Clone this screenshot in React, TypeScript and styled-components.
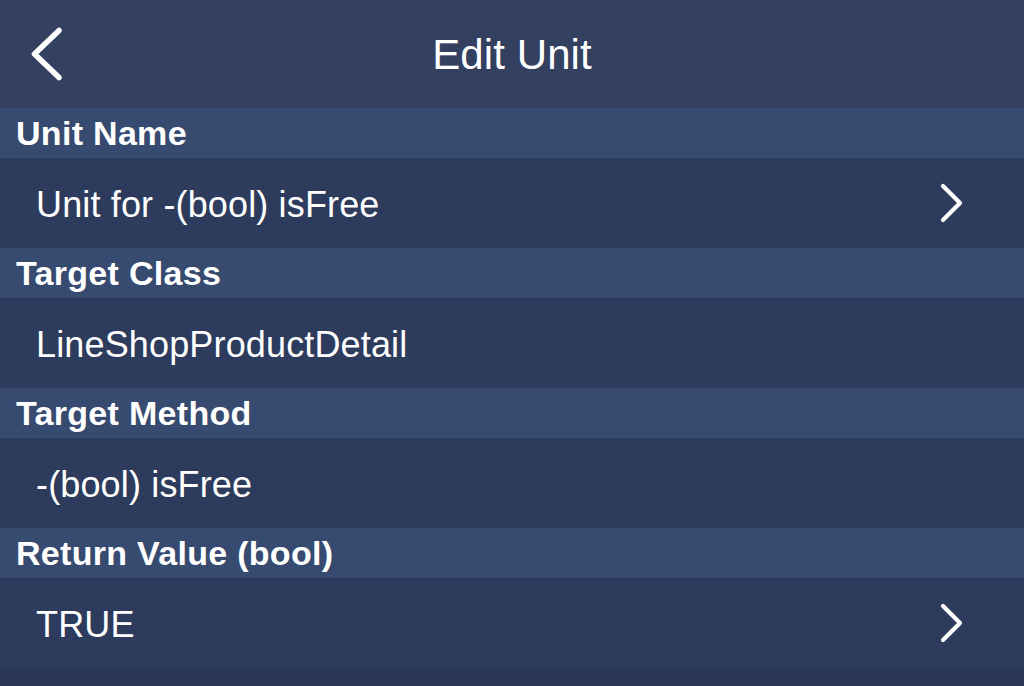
import React from 'react';
import styled, { createGlobalStyle } from 'styled-components';

const GlobalStyle = createGlobalStyle`
  html, body {
    margin: 0;
    padding: 0;
    background: #2b3757;
  }
  body {
    font-family: 'Liberation Sans', Arial, sans-serif;
    -webkit-font-smoothing: antialiased;
  }
`;

const Screen = styled.div`
  width: 1024px;
  height: 686px;
  overflow: hidden;
  background: #2b3757;
  color: #ffffff;
  display: flex;
  flex-direction: column;
`;

const NavBar = styled.div`
  height: 108px;
  flex-shrink: 0;
  background: #33405f;
  display: grid;
  grid-template-columns: 1fr auto 1fr;
  align-items: center;
`;

const BackButton = styled.button`
  justify-self: start;
  background: none;
  border: none;
  padding: 0;
  margin: 0 0 0 29px;
  width: 36px;
  height: 56px;
  display: flex;
  align-items: center;
  cursor: pointer;
`;

const Title = styled.h1`
  margin: 0;
  padding-top: 2px;
  font-size: 42px;
  font-weight: 400;
  color: #ffffff;
  letter-spacing: 0.1px;
`;

const SectionHeader = styled.div`
  height: 50px;
  flex-shrink: 0;
  background: #374a6f;
  display: flex;
  align-items: center;
  padding-left: 16px;
  font-size: 34px;
  font-weight: 700;
  letter-spacing: 0.3px;
`;

const Row = styled.div`
  height: 90px;
  flex-shrink: 0;
  background: #2d3b5c;
  display: flex;
  align-items: center;
  justify-content: space-between;
  padding: 0 59px 0 36px;
  font-size: 36px;
  font-weight: 400;
`;

const RowText = styled.span`
  padding-top: 4px;
  letter-spacing: 0.15px;
`;

const BackChevron = () => (
  <svg width="36" height="56" viewBox="0 0 36 56" fill="none">
    <path
      d="M30 4.5 L5.5 28 L30 51.5"
      stroke="#ffffff"
      strokeWidth="5.5"
      strokeLinecap="round"
      strokeLinejoin="round"
    />
  </svg>
);

const Disclosure = () => (
  <svg width="26" height="40" viewBox="0 0 26 40" fill="none">
    <path
      d="M4 3 L21 20 L4 37"
      stroke="#ffffff"
      strokeWidth="4.2"
      strokeLinecap="round"
      strokeLinejoin="round"
    />
  </svg>
);

const sections = [
  { label: 'Unit Name', value: 'Unit for -(bool) isFree', link: true },
  { label: 'Target Class', value: 'LineShopProductDetail', link: false },
  { label: 'Target Method', value: '-(bool) isFree', link: false },
  { label: 'Return Value (bool)', value: 'TRUE', link: true },
];

const App: React.FC = () => {
  return (
    <>
      <GlobalStyle />
      <Screen>
        <NavBar>
          <BackButton aria-label="Back">
            <BackChevron />
          </BackButton>
          <Title>Edit Unit</Title>
          <div />
        </NavBar>
        {sections.map(s => (
          <React.Fragment key={s.label}>
            <SectionHeader>{s.label}</SectionHeader>
            <Row>
              <RowText>{s.value}</RowText>
              {s.link && <Disclosure />}
            </Row>
          </React.Fragment>
        ))}
      </Screen>
    </>
  );
};

export default App;
